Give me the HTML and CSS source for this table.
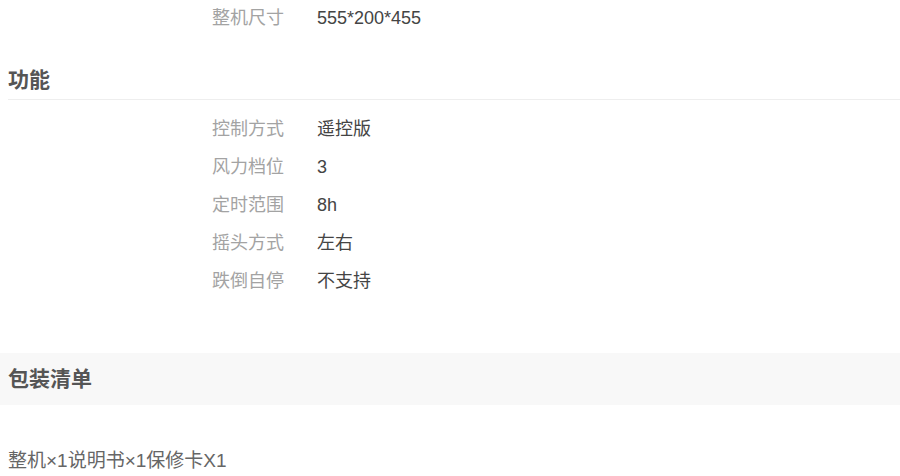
FILE: index.html
```html
<!DOCTYPE html>
<html lang="zh-CN">
<head>
  <meta charset="UTF-8" />
  <meta name="viewport" content="width=device-width, initial-scale=1.0"/>
  <title>商品参数</title>
  <link rel="stylesheet" href="styles.css">
</head>
<body>
  <div class="spec-section">
    <ul class="spec-list first">
      <li><span class="spec-name">整机尺寸</span><span class="spec-value">555*200*455</span></li>
    </ul>
  </div>

  <div class="spec-section">
    <h3 class="spec-title">功能</h3>
    <ul class="spec-list">
      <li><span class="spec-name">控制方式</span><span class="spec-value">遥控版</span></li>
      <li><span class="spec-name">风力档位</span><span class="spec-value">3</span></li>
      <li><span class="spec-name">定时范围</span><span class="spec-value">8h</span></li>
      <li><span class="spec-name">摇头方式</span><span class="spec-value">左右</span></li>
      <li><span class="spec-name">跌倒自停</span><span class="spec-value">不支持</span></li>
    </ul>
  </div>

  <div class="package">
    <h3 class="package-title">包装清单</h3>
    <p class="package-text">整机×1说明书×1保修卡X1</p>
  </div>
</body>
</html>
```

FILE: styles.css
```css
body {
  margin: 0;
  padding: 0;
  background-color: #fff;
  font-family: "Liberation Sans", "Noto Sans CJK SC", sans-serif;
  color: #444;
}
.spec-section {
  padding: 0 0 0 8px;
}
.spec-list {
  list-style: none;
  margin: 0;
  padding: 10px 0 0 0;
}
.spec-list.first {
  padding-top: 0;
  margin-top: -1px;
}
.spec-list li {
  display: flex;
  height: 38px;
  line-height: 38px;
  font-size: 18px;
  padding-left: 204px;
}
.spec-name {
  width: 74px;
  color: #a3a3a3;
  white-space: nowrap;
}
.spec-value {
  margin-left: 31px;
  color: #444;
}
.spec-title {
  margin: 23px 0 0 0;
  height: 39px;
  line-height: 40px;
  font-size: 21px;
  font-weight: bold;
  color: #555;
  border-bottom: 1px solid #eee;
}
.package {
  margin-top: 53px;
}
.package-title {
  margin: 0;
  padding-left: 8px;
  height: 52px;
  line-height: 52px;
  font-size: 21px;
  font-weight: bold;
  color: #555;
  background-color: #f8f8f8;
}
.package-text {
  margin: 37px 0 0 0;
  padding-left: 8px;
  line-height: 38px;
  font-size: 19px;
  color: #666;
}
```
